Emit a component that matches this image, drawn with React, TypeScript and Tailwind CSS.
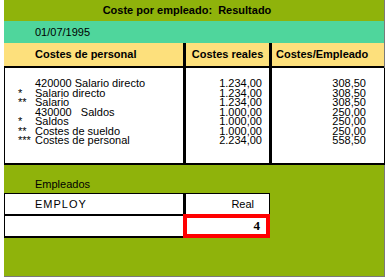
const rows = [
  { mark: "", label: "420000 Salario directo", real: "1.234,00", per: "308,50" },
  { mark: "*", label: "Salario directo", real: "1.234,00", per: "308,50" },
  { mark: "**", label: "Salario", real: "1.234,00", per: "308,50" },
  { mark: "", label: "430000\u00a0\u00a0\u00a0Saldos", real: "1.000,00", per: "250,00" },
  { mark: "*", label: "Saldos", real: "1.000,00", per: "250,00" },
  { mark: "**", label: "Costes de sueldo", real: "1.000,00", per: "250,00" },
  { mark: "***", label: "Costes de personal", real: "2.234,00", per: "558,50" },
];

export default function App() {
  return (
    <div className="w-[390px] h-[280px] bg-white font-['Liberation_Sans',Arial,sans-serif] text-[11px] text-black">
      <div className="ml-[4px] w-[381px] h-[277px] bg-[#8fb30b] border-r border-b border-[#7a7a7a] flex flex-col">
        <div className="h-[21px] flex items-center justify-center font-bold pr-[14px]">
          Coste por empleado:&nbsp; Resultado
        </div>
        <div className="h-[22px] bg-[#4fd69c] flex items-center pl-[31px]">01/07/1995</div>

        <div className="h-[23px] bg-[#fde07c] flex font-bold">
          <div className="w-[179px] pl-[31px] flex items-center">Costes de personal</div>
          <div className="w-[3px] bg-black" />
          <div className="w-[83px] flex items-center justify-center">Costes reales</div>
          <div className="w-[3px] bg-black" />
          <div className="flex-1 flex items-center pl-[4px]">Costes/Empleado</div>
        </div>
        <div className="h-[2px] bg-black" />
        <div className="h-[97px] bg-white flex border-l border-r border-b-2 border-black w-[381px]">
          <div className="w-[178px] pt-[11px] leading-[9.5px]">
            {rows.map((r, i) => (
              <div key={i} className="flex">
                <span className="w-[30px] pl-[13px]">{r.mark}</span>
                <span>{r.label}</span>
              </div>
            ))}
          </div>
          <div className="w-[3px] bg-black" />
          <div className="w-[83px] pt-[11px] pr-[7px] leading-[9.5px] text-right">
            {rows.map((r, i) => (
              <div key={i}>{r.real}</div>
            ))}
          </div>
          <div className="w-[3px] bg-black" />
          <div className="flex-1 pt-[11px] pr-[18px] leading-[9.5px] text-right">
            {rows.map((r, i) => (
              <div key={i}>{r.per}</div>
            ))}
          </div>
        </div>

        <div className="h-[28px] pl-[31px] flex items-end pb-[1px]">Empleados</div>
        <div className="w-[266px] border-t border-black bg-white">
          <div className="h-[20px] flex border-l border-r border-black">
            <div className="w-[178px] pl-[30px] flex items-center tracking-[1px]">EMPLOY</div>
            <div className="w-[3px] bg-black" />
            <div className="flex-1 flex items-center justify-end pr-[15px]">Real</div>
          </div>
          <div className="h-[2px] bg-black w-[182px]" />
          <div className="h-[22px] flex">
            <div className="w-[179px] border-l border-b-2 border-black" />
            <div className="w-[87px] h-[24px] -mt-[2px] border-[4px] border-[#ff0000] bg-white flex items-center justify-end pr-[6px] font-['Liberation_Serif',serif] font-bold text-[13px]">
              4
            </div>
          </div>
        </div>
      </div>
    </div>
  );
}
